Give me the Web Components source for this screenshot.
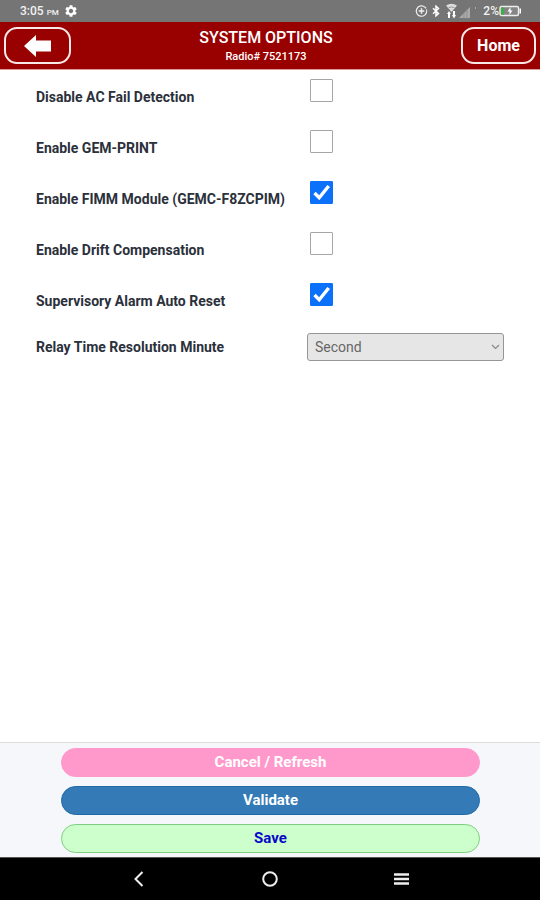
<!DOCTYPE html>
<html lang="en">
<head>
<meta charset="utf-8">
<meta name="viewport" content="width=device-width, initial-scale=1">
<title>System Options</title>
<style>
html, body { margin: 0; }
body { font-family: Roboto, "Liberation Sans", sans-serif; background: #fff; color: #2b303b; }
</style>
</head>
<body>
<system-screen>
  <status-bar slot="top" time="3:05" period="PM" battery="2%"></status-bar>
  <app-header slot="top"><span slot="title">SYSTEM OPTIONS</span><span slot="sub">Radio# 7521173</span></app-header>
  <check-row label="Disable AC Fail Detection"></check-row>
  <check-row label="Enable GEM-PRINT"></check-row>
  <check-row label="Enable FIMM Module (GEMC-F8ZCPIM)" checked></check-row>
  <check-row label="Enable Drift Compensation"></check-row>
  <check-row label="Supervisory Alarm Auto Reset" checked></check-row>
  <select-row label="Relay Time Resolution Minute" value="Second"></select-row>
  <action-bar slot="bottom">
    <pill-button kind="cancel">Cancel / Refresh</pill-button>
    <pill-button kind="validate">Validate</pill-button>
    <pill-button kind="save">Save</pill-button>
  </action-bar>
  <nav-bar slot="bottom"></nav-bar>
</system-screen>
<script>
class Base extends HTMLElement {
  connectedCallback() {
    if (!this.shadowRoot) this.attachShadow({ mode: "open" }).innerHTML = this.render();
  }
}

customElements.define("system-screen", class extends Base {
  render() {
    return `<style>
      :host { display: flex; flex-direction: column; min-height: 100vh; }
      main { flex: 1; padding: 1px 36px 16px; }
    </style>
    <slot name="top"></slot><main><slot></slot></main><slot name="bottom"></slot>`;
  }
});

customElements.define("status-bar", class extends Base {
  render() {
    return `<style>
      :host { display: flex; align-items: center; justify-content: space-between; height: 22px;
        padding: 0 18px 0 20px; background: #757575; color: #f2f2f2; font-size: 12px; font-weight: 500; line-height: 22px; }
      div { display: flex; align-items: center; }
      small { font-size: 8px; margin-left: 3px; padding-top: 3px; }
      svg { display: block; }
      .gear { margin-left: 6px; }
      .bt { margin-left: 4px; } .net { margin-left: 6px; } .pct { margin-left: 7px; }
    </style>
    <div><span>${this.getAttribute("time")}</span><small>${this.getAttribute("period")}</small>
      <svg class="gear" width="12" height="12" viewBox="2 2 20 20"><path fill="#fff" d="M19.14 12.94c.04-.3.06-.61.06-.94 0-.32-.02-.64-.07-.94l2.03-1.58c.18-.14.23-.41.12-.61l-1.92-3.32c-.12-.22-.37-.29-.59-.22l-2.39.96c-.5-.38-1.03-.7-1.62-.94l-.36-2.54c-.04-.24-.24-.41-.48-.41h-3.84c-.24 0-.43.17-.47.41l-.36 2.54c-.59.24-1.13.57-1.62.94l-2.39-.96c-.22-.08-.47 0-.59.22L2.74 8.87c-.12.21-.08.47.12.61l2.03 1.58c-.05.3-.09.63-.09.94s.02.64.07.94l-2.03 1.58c-.18.14-.23.41-.12.61l1.92 3.32c.12.22.37.29.59.22l2.39-.96c.5.38 1.03.7 1.62.94l.36 2.54c.05.24.24.41.48.41h3.84c.24 0 .44-.17.47-.41l.36-2.54c.59-.24 1.13-.56 1.62-.94l2.39.96c.22.08.47 0 .59-.22l1.92-3.32c.12-.22.07-.47-.12-.61l-2.01-1.58zM12 15.6c-1.98 0-3.6-1.62-3.6-3.6s1.62-3.6 3.6-3.6 3.6 1.62 3.6 3.6-1.62 3.6-3.6 3.6z"/></svg>
    </div>
    <div>
      <svg width="13" height="14" viewBox="0 0 13 14" fill="none" stroke="#eee"><path d="M10 3.2A5.2 5.2 0 1 0 11.7 7" stroke-width="1.2"/><path d="M10 3.2A5.2 5.2 0 0 1 11.7 7" stroke-width="1.2" stroke-dasharray="1.5 1"/><path d="M6.5 4.2v5.6M3.7 7h5.6" stroke-width="1.5"/></svg>
      <svg class="bt" width="8" height="12" viewBox="0 0 8 12" fill="none" stroke="#fff" stroke-width="1.5"><path d="M1 3.3L6.5 8.5L4 10.8V1.2L6.5 3.5L1 8.7"/></svg>
      <svg class="net" width="30" height="16" viewBox="0 0 30 16"><path fill="#ddd" d="M0 2.5Q5.500 -1 11 2.500L5.500 9z"/><path fill="none" stroke="#999" d="M2.500 4.8Q5.500 3 8.500 4.8"/><path fill="#fff" d="M1 11L3 8L5 11H4v4H2v-4zM7 8h2v4h1l-2 3.500L6 12h1z"/><path fill="#aaa" d="M24 4v11H13z"/><path fill="#8a8a8a" d="M17.500 10h.8v6h-.8zM20.500 7h.8v9h-.8z"/><path fill="#aaa" d="M29 4h1v2h-1z"/></svg>
      <span class="pct">${this.getAttribute("battery")}</span>
      <svg width="23" height="12" viewBox="0 0 23 12"><rect x="1" y="1.500" width="18.500" height="9" rx="1.500" fill="#858585" stroke="#eee" stroke-width="1.400"/><path fill="#3fae49" d="M2 2.500h3v7H2z"/><path fill="#fff" d="M11.500 2L8.500 6.500h2V10l3-4.500h-2zM20.500 3.500H22v5h-1.500z"/></svg>
    </div>`;
  }
});

customElements.define("app-header", class extends Base {
  render() {
    return `<style>
      :host { display: grid; grid-template-columns: auto 1fr auto; align-items: center; height: 47px;
        padding: 0 4px; background: #990000; color: #fff; border-bottom: 1px solid #d99a9a; }
      button { height: 37px; box-sizing: border-box; border: 2px solid #f8e8e8; border-radius: 13px; background: none;
        color: #fff; font: 700 16px/20px Roboto, sans-serif; padding: 0; display: grid; place-items: center; cursor: pointer; }
      .back { width: 67px; }
      .home { width: 75px; }
      div { text-align: center; }
      h1 { margin: 0; font-size: 16px; line-height: 22px; font-weight: 500; }
      p { margin: 0; font-size: 11px; line-height: 16px; font-weight: 500; }
    </style>
    <button class="back" aria-label="Back"><svg width="28" height="22" viewBox="0 0 28 22"><path fill="#fff" d="M0 11L12 0V5.500H27V16.500H12V22z"/></svg></button>
    <div><h1><slot name="title"></slot></h1><p><slot name="sub"></slot></p></div>
    <button class="home">Home</button>`;
  }
});

const rowStyle = `
  :host { display: grid; grid-template-columns: 271fr 197fr; align-items: center; }
  label { font-size: 14px; line-height: 20px; font-weight: 700; white-space: nowrap; }`;

customElements.define("check-row", class extends Base {
  render() {
    return `<style>${rowStyle}
      :host { height: 51px; }
      span { display: grid; width: 23px; margin: 0 0 12px 3px; }
      input, svg { grid-area: 1 / 1; width: 23px; height: 23px; }
      input { appearance: none; box-sizing: border-box; margin: 0; border: 1px solid #a6a6a6; border-radius: 1px; background: #fff; }
      input:checked { background: #0b70fa; border-color: #0b70fa; }
      svg { pointer-events: none; visibility: hidden; }
      input:checked + svg { visibility: visible; }
    </style>
    <label for="c">${this.getAttribute("label")}</label>
    <span><input id="c" type="checkbox" ${this.hasAttribute("checked") ? "checked" : ""}><svg viewBox="0 0 23 23" fill="none" stroke="#fff" stroke-width="3.400"><path d="M4.500 12L9.200 16.700L18.700 5"/></svg></span>`;
  }
});

customElements.define("select-row", class extends Base {
  render() {
    return `<style>${rowStyle}
      :host { height: 42px; }
      span { display: grid; align-items: center; }
      select, svg { grid-area: 1 / 1; }
      select { appearance: none; width: 100%; height: 28px; box-sizing: border-box; padding: 0 7px; border: 1px solid #969696;
        border-radius: 3px; background: #e6e6e6; color: #666; opacity: 1; font: 400 14px/20px Roboto, sans-serif; }
      svg { justify-self: end; margin-right: 4px; pointer-events: none; }
    </style>
    <label for="s">${this.getAttribute("label")}</label>
    <span><select id="s" disabled><option>${this.getAttribute("value")}</option></select>
    <svg width="9" height="6" viewBox="0 0 9 6" fill="none" stroke="#888" stroke-width="1.200"><path d="M1 1L4.500 4.500L8 1"/></svg></span>`;
  }
});

customElements.define("action-bar", class extends Base {
  render() {
    return `<style>
      :host { display: flex; flex-direction: column; gap: 9px; padding: 5px 60px 4px 61px; background: #f5f7fb; border-top: 1px solid #dcdcdc; }
    </style><slot></slot>`;
  }
});

customElements.define("pill-button", class extends Base {
  render() {
    return `<style>
      :host { display: block; }
      button { display: block; width: 100%; height: 29px; box-sizing: border-box; padding: 0 0 1px; border: 1px solid; border-radius: 15px;
        font: 700 15px/20px Roboto, sans-serif; cursor: pointer; }
      .cancel { background: #ff99cc; border-color: #ff99cc; color: #fff; }
      .validate { background: #337ab7; border-color: #1f6ba8; color: #fff; }
      .save { background: #ccffcc; border-color: #7fcf80; color: #0808c8; }
    </style><button class="${this.getAttribute("kind")}"><slot></slot></button>`;
  }
});

customElements.define("nav-bar", class extends Base {
  render() {
    return `<style>
      :host { display: flex; justify-content: center; align-items: center; gap: 107px; height: 42px; background: #000; border-top: 1px solid #555; }
      button { width: 24px; height: 24px; padding: 0; border: 0; background: none; display: grid; place-items: center; cursor: pointer; }
      svg { fill: none; stroke: #eee; stroke-width: 2; }
    </style>
    <button aria-label="Back"><svg width="18" height="18" viewBox="0 0 18 18"><path d="M12.500 2L5.500 9L12.500 16"/></svg></button>
    <button aria-label="Home"><svg width="18" height="18" viewBox="0 0 18 18"><circle cx="9" cy="9" r="6.800"/></svg></button>
    <button aria-label="Recent apps"><svg width="18" height="18" viewBox="0 0 18 18"><path d="M2 4.500H17M2 9H17M2 13.500H17" stroke-width="2.500"/></svg></button>`;
  }
});
</script>
</body>
</html>
